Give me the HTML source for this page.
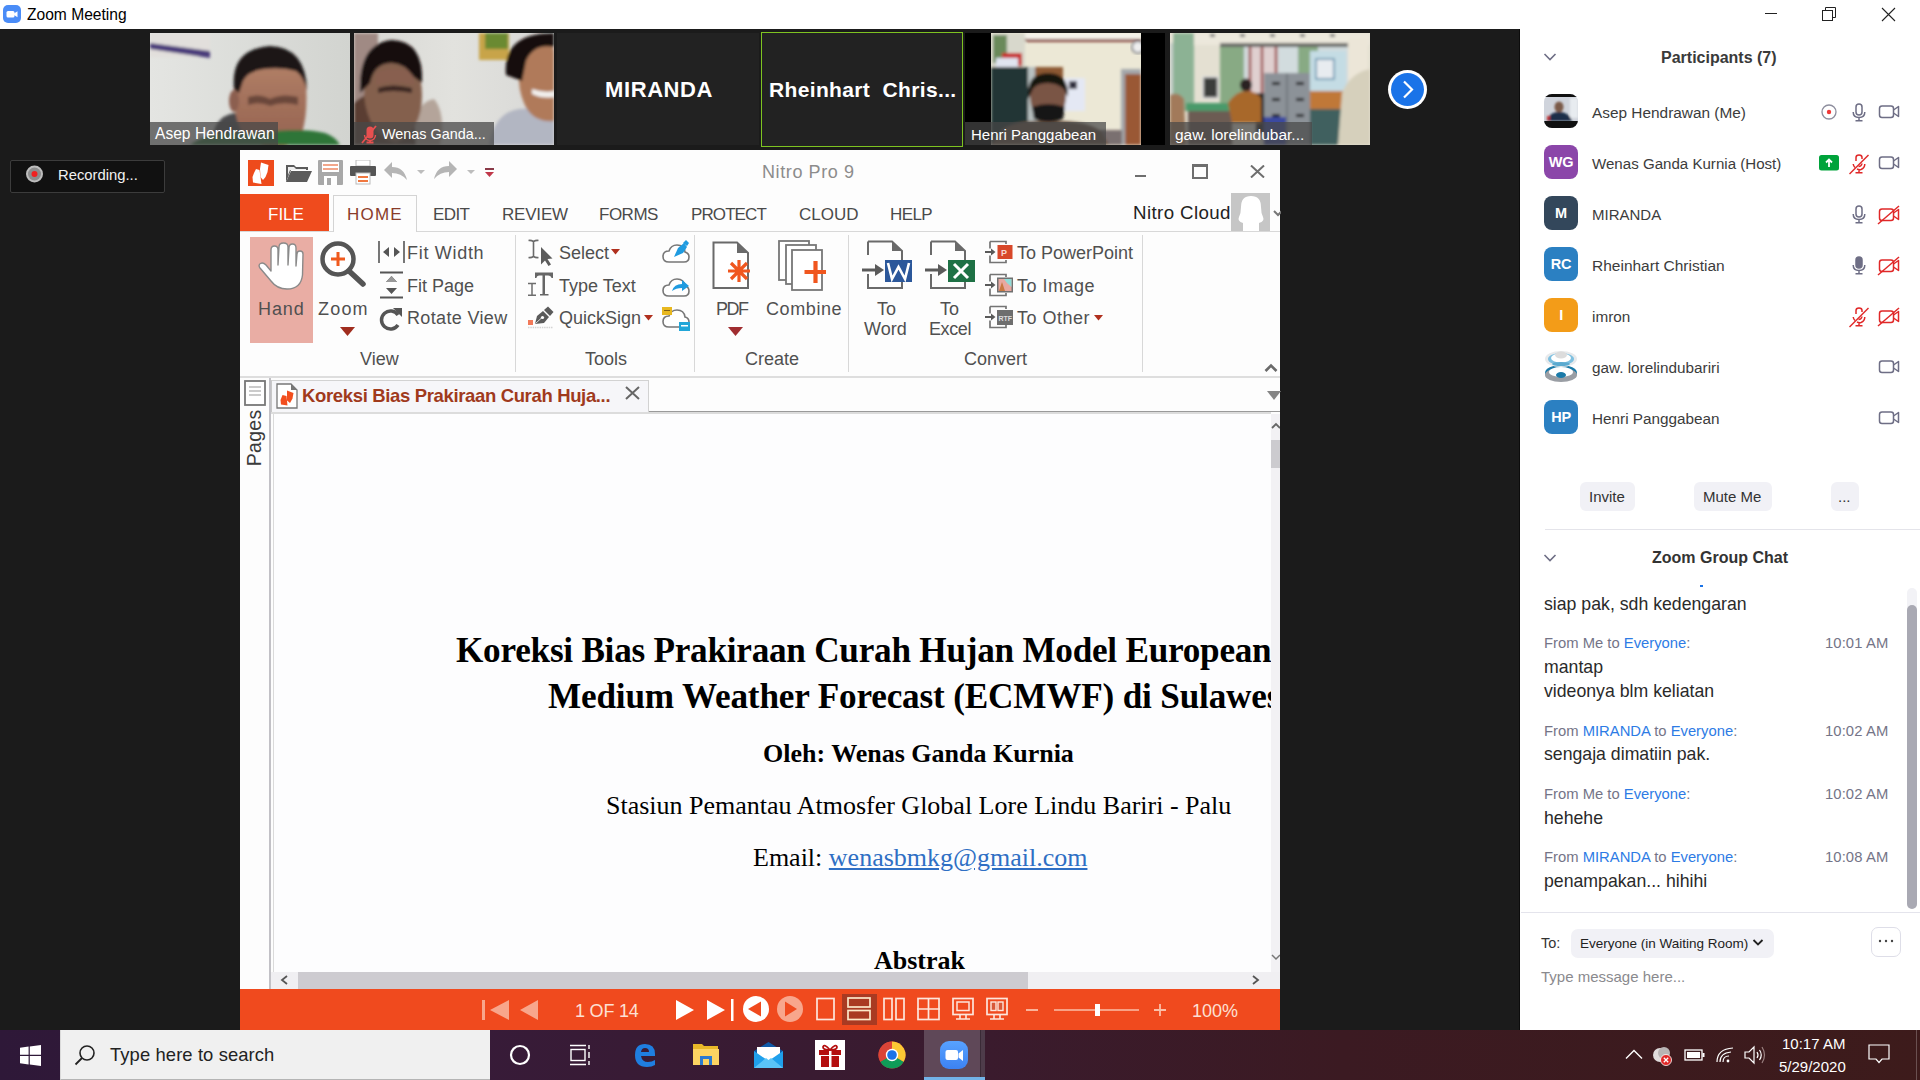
<!DOCTYPE html>
<html><head><meta charset="utf-8">
<style>
*{box-sizing:border-box}
html,body{margin:0;padding:0}
body{width:1920px;height:1080px;position:relative;overflow:hidden;background:#1b1b1b;font-family:"Liberation Sans",sans-serif}
.a{position:absolute}
.t{position:absolute;white-space:nowrap;line-height:1}
</style></head><body>
<!-- TITLE BAR -->
<div class="a" style="left:0;top:0;width:1920px;height:29px;background:#fff"></div>
<div class="a" style="left:3px;top:5px;width:18px;height:18px;background:#4a8cf7;border-radius:5px"></div>
<svg class="a" style="left:3px;top:5px" width="18" height="18"><rect x="3.5" y="6" width="8" height="6.5" rx="1.5" fill="#fff"/><path d="M11 8.5 L14.5 6.3 V12.2 L11 10Z" fill="#fff"/></svg>
<div class="t" style="left:27px;top:7px;font-size:15.6px;color:#000">Zoom Meeting</div>
<div class="a" style="left:1765px;top:13px;width:12px;height:1px;background:#222"></div>
<svg class="a" style="left:1822px;top:7px" width="15" height="15"><rect x="0.5" y="3.5" width="10" height="10" fill="none" stroke="#222"/><path d="M3.5 3.5 V0.5 H13.5 V10.5 H10.5" fill="none" stroke="#222"/></svg>
<svg class="a" style="left:1881px;top:7px" width="15" height="15"><path d="M1 1 L14 14 M14 1 L1 14" stroke="#222" stroke-width="1.1"/></svg>

<!-- VIDEO STRIP -->
<svg class="a" style="left:150px;top:33px" width="200" height="112">
<defs><filter id="b1" x="-10%" y="-10%" width="120%" height="120%"><feGaussianBlur stdDeviation="1.5"/></filter>
<filter id="b2" x="-20%" y="-20%" width="140%" height="140%"><feGaussianBlur stdDeviation="3"/></filter>
<linearGradient id="w1" x1="0" y1="0" x2="1" y2="0"><stop offset="0" stop-color="#e4e5e2"/><stop offset="1" stop-color="#d2d4d0"/></linearGradient>
<linearGradient id="f1" x1="0" y1="0" x2="0" y2="1"><stop offset="0" stop-color="#b8866c"/><stop offset="0.5" stop-color="#a4725c"/><stop offset="1" stop-color="#946250"/></linearGradient></defs>
<rect width="200" height="112" fill="url(#w1)"/>
<g filter="url(#b1)">
<rect x="0" y="0" width="60" height="24" fill="#e2dfdc"/>
<path d="M0 10 L60 18 L60 25 L0 16Z" fill="#4a3a7a"/>
<path d="M62 112 Q62 84 84 80 L98 84 L96 112Z" fill="#4a4a4c"/>
<path d="M84 60 Q82 24 120 14 Q152 16 156 52 Q158 80 152 100 Q140 118 118 114 Q94 110 88 90 Q84 78 84 60Z" fill="url(#f1)"/>
<ellipse cx="84" cy="68" rx="5" ry="11" fill="#8c5e50"/>
<path d="M84 56 Q80 16 120 13 Q156 14 157 58 Q154 44 146 38 Q132 34 114 36 Q98 38 93 48 L89 60Z" fill="#1c1614"/>
<path d="M98 64 Q110 60 120 66 Q132 60 148 64 L148 72 Q132 68 120 73 Q110 68 98 72Z" fill="#6a463a"/>
<path d="M40 112 Q60 96 110 100 Q150 94 175 100 Q186 104 190 112Z" fill="#2f7438"/>
</g>
<rect x="0" y="89" width="128" height="23" fill="rgba(72,72,72,0.75)"/>
</svg>
<div class="t" style="left:155px;top:126px;font-size:15.6px;color:#fff">Asep Hendrawan</div>

<svg class="a" style="left:354px;top:33px" width="200" height="112">
<defs><linearGradient id="w2" x1="0" y1="0" x2="1" y2="0"><stop offset="0" stop-color="#d8d8d4"/><stop offset="0.5" stop-color="#e2e2de"/><stop offset="1" stop-color="#d8d8d6"/></linearGradient></defs>
<rect width="200" height="112" fill="url(#w2)"/>
<g filter="url(#b1)">
<rect x="0" y="0" width="24" height="95" fill="#a08a84"/>
<rect x="125" y="0" width="30" height="27" fill="#c8a448"/>
<rect x="131" y="0" width="23" height="16" fill="#6a8a30"/>
<path d="M55 112 Q58 70 80 66 Q92 80 86 112Z" fill="#b4a49a"/>
<path d="M0 112 L0 70 Q10 60 20 62 L60 80 L62 112Z" fill="#5a3c32"/>
<path d="M10 62 Q10 28 40 27 Q68 28 68 62 Q68 98 42 110 Q14 102 10 62Z" fill="#84604e"/>
<path d="M22 40 Q40 32 60 40 L60 52 Q40 46 22 52Z" fill="#8a6050" opacity="0.7"/>
<path d="M6 60 Q4 10 38 7 Q70 8 68 50 L60 44 Q50 30 38 30 Q20 30 16 50Z" fill="#161010"/>
<path d="M24 55 Q38 50 58 55 L58 60 Q38 56 24 60Z" fill="#3a2620"/>
<path d="M135 112 Q140 80 165 76 L200 74 L200 112Z" fill="#b2b6c2"/>
<path d="M165 40 Q162 8 185 6 Q200 8 200 20 L200 88 Q178 90 170 70 Q164 56 165 40Z" fill="#b07a5a"/>
<path d="M152 42 Q148 0 200 0 L200 14 Q180 10 172 28 L168 48Z" fill="#15100e"/>
<path d="M178 56 Q190 60 200 58 L200 64 Q188 66 178 61Z" fill="#f2f0ee"/>
</g>
<rect x="0" y="89" width="140" height="23" fill="rgba(72,72,72,0.75)"/>
<path d="M12.5 97 a3.5 3.5 0 0 1 7 0 v5 a3.5 3.5 0 0 1 -7 0Z" fill="#e85050"/><path d="M10.5 102 a5.5 5.5 0 0 0 11 0" stroke="#e85050" stroke-width="1.4" fill="none"/><path d="M16 107 v2.5 M12.5 109.5 h7" stroke="#e85050" stroke-width="1.8"/><path d="M8 110 L22 93" stroke="#e85050" stroke-width="1.8"/>
</svg>
<div class="t" style="left:382px;top:127px;font-size:14.4px;color:#fff">Wenas Ganda...</div>

<div class="a" style="left:557px;top:33px;width:202px;height:112px;background:#222"></div>
<div class="t" style="left:605px;top:79px;font-size:22px;font-weight:700;color:#fff;letter-spacing:0.6px">MIRANDA</div>
<div class="a" style="left:761px;top:32px;width:202px;height:115px;background:#222;border:1.5px solid #7ec321"></div>
<div class="t" style="left:769px;top:79px;font-size:21px;font-weight:700;color:#fff;letter-spacing:0.35px">Rheinhart&nbsp; Chris...</div>

<div class="a" style="left:965px;top:33px;width:200px;height:112px;background:#000"></div>
<svg class="a" style="left:991px;top:33px" width="150" height="112">
<rect width="150" height="112" fill="#ece8d6"/>
<g filter="url(#b1)">
<rect x="30" y="0" width="120" height="7" fill="#f4f2ea"/>
<path d="M30 5 L36 9 H150 V6 H36Z" fill="#8a4a40"/>
<rect x="0" y="0" width="34" height="34" fill="#d8d8cc"/>
<rect x="2" y="2" width="14" height="28" fill="#6a8a5a"/>
<rect x="11" y="20" width="20" height="13" fill="#c82828"/>
<rect x="5" y="25" width="22" height="9" fill="#e0e4f0"/>
<rect x="0" y="34" width="37" height="78" fill="#203636"/>
<rect x="37" y="34" width="9" height="60" fill="#b8c0c0"/>
<rect x="44" y="34" width="28" height="28" fill="#8c5832"/>
<rect x="74" y="45" width="20" height="33" fill="#e4e8f4"/>
<rect x="78" y="48" width="8" height="8" fill="#303040"/>
<rect x="130" y="36" width="20" height="76" fill="#a4a8ac"/>
<rect x="134" y="41" width="16" height="71" fill="#9a5834"/>
<rect x="105" y="97" width="26" height="15" fill="#7a7070"/>
<path d="M0 112 L12 96 Q30 86 57 88 Q92 86 110 98 L118 112Z" fill="#6a5444"/>
<path d="M39 62 Q39 46 57 44 Q75 46 75 62 Q75 84 57 90 Q39 84 39 62Z" fill="#7a5444"/>
<path d="M37 66 Q35 40 57 40 Q78 40 77 64 L73 56 Q66 50 57 50 Q44 50 41 58Z" fill="#171210"/>
<path d="M41 74 Q57 68 74 74 L72 86 Q57 92 43 86Z" fill="#141414"/>
</g>
<circle cx="147" cy="14" r="6" fill="#eeeeee" stroke="#4a5060" stroke-width="1.4" filter="url(#b1)"/>
</svg>
<div class="a" style="left:965px;top:122px;width:141px;height:23px;background:rgba(70,70,70,0.72)"></div>
<div class="t" style="left:971px;top:127px;font-size:15px;color:#fff">Henri Panggabean</div>

<svg class="a" style="left:1170px;top:33px" width="200" height="112">
<rect width="200" height="112" fill="#e4e0d2"/>
<g filter="url(#b1)">
<rect x="0" y="0" width="200" height="12" fill="#ece8dc"/>
<g fill="#7a7a78"><rect x="10" y="1" width="5" height="3"/><rect x="40" y="1" width="5" height="3"/><rect x="70" y="1" width="5" height="3"/><rect x="100" y="1" width="5" height="3"/><rect x="130" y="1" width="5" height="3"/><rect x="160" y="1" width="5" height="3"/></g>
<rect x="0" y="10" width="4" height="60" fill="#c8d0cc"/>
<rect x="3" y="0" width="21" height="78" fill="#8cb294"/>
<rect x="50" y="10" width="130" height="4" fill="#6a6a68"/>
<rect x="50" y="14" width="130" height="70" fill="#d2dcde"/>
<rect x="78" y="14" width="30" height="50" fill="#e0d0d0"/>
<path d="M80 14 V64 M92 14 V64 M106 14 V64" stroke="#9a4a48" stroke-width="2.5"/>
<rect x="50" y="14" width="24" height="68" fill="#88aa84"/>
<rect x="128" y="14" width="20" height="60" fill="#88aa84"/>
<rect x="140" y="18" width="36" height="40" fill="#c4dce4"/>
<rect x="146" y="26" width="18" height="20" fill="#e8ecf0" stroke="#5a8aa8" stroke-width="1.5"/>
<rect x="140" y="58" width="36" height="18" fill="#c07838"/>
<rect x="140" y="76" width="36" height="36" fill="#40605e"/>
<rect x="178" y="5" width="20" height="50" fill="#ece6d8"/>
<rect x="33" y="44" width="15" height="21" fill="#3a3e3a" stroke="#e0e0e0" stroke-width="1.5"/>
<rect x="16" y="70" width="48" height="8" fill="#4a9a6a"/>
<rect x="18" y="78" width="44" height="34" fill="#6c5c52"/>
<rect x="86" y="60" width="12" height="40" fill="#2a2622"/>
<path d="M58 70 Q66 58 76 58 Q88 58 91 66 L91 90 L62 90Z" fill="#a8682a"/>
<ellipse cx="76" cy="52" rx="6" ry="6.5" fill="#2a2020"/>
<rect x="94" y="40" width="46" height="72" fill="#8c9298"/>
<path d="M117 40 V112" stroke="#6a7076" stroke-width="1.5"/>
<g fill="#1a1a1a"><rect x="102" y="49" width="8" height="3"/><rect x="126" y="49" width="8" height="3"/><rect x="102" y="65" width="8" height="3"/><rect x="126" y="65" width="8" height="3"/><rect x="102" y="81" width="8" height="3"/><rect x="126" y="81" width="8" height="3"/></g>
<rect x="94" y="84" width="22" height="28" fill="#3a4aa0"/>
<path d="M168 112 L172 60 Q180 40 200 36 L200 112Z" fill="#d6d0bc"/>
<path d="M0 112 V62 Q8 58 14 66 L16 112Z" fill="#a27a5a"/>
</g>
<rect x="0" y="89" width="142" height="23" fill="rgba(72,72,72,0.72)"/>
</svg>
<div class="t" style="left:1175px;top:127px;font-size:15.5px;color:#fff">gaw. lorelindubar...</div>

<svg class="a" style="left:1387px;top:69px" width="41" height="41"><circle cx="20.5" cy="20.5" r="19.5" fill="#fff"/><circle cx="20.5" cy="20.5" r="16.5" fill="#1a73e8"/><path d="M17 12.5 L25 20.5 L17 28.5" stroke="#fff" stroke-width="2.2" fill="none"/></svg>

<!-- RECORDING -->
<div class="a" style="left:10px;top:160px;width:155px;height:33px;background:#111;border:1px solid #3c3c3c;border-radius:2px"></div>
<svg class="a" style="left:25px;top:165px" width="19" height="19"><circle cx="9.5" cy="9" r="8.5" fill="#bdbdbd"/><circle cx="9.5" cy="9" r="6.5" fill="#8c8c8c"/><circle cx="9.5" cy="9" r="3" fill="#f02020"/></svg>
<div class="t" style="left:58px;top:168px;font-size:14.8px;color:#f2f2f2">Recording...</div>

<!-- NITRO WINDOW -->
<div class="a" style="left:240px;top:150px;width:1040px;height:880px;background:#fdfdfd"></div>
<!-- QAT -->
<svg class="a" style="left:248px;top:160px" width="26" height="26"><rect width="26" height="26" fill="#ee4b1c"/><path d="M13 2.5 L20.5 5 L19.5 12 L17.5 17 L15 20 L12.5 17 L12 9Z" fill="#fff"/><path d="M8 9 L11.5 10 L13.5 24 L5 22.5 L4.5 17 L6 13Z" fill="#fff"/></svg>
<svg class="a" style="left:285px;top:162px" width="28" height="22"><path d="M1 3 H9 L11 5 H23 V8 H6 L1 20Z" fill="#5b5b5b"/><path d="M6 9 H27 L22 20 H1Z" fill="#5b5b5b"/><path d="M3 5 H9 L11 7 H21 V8 H5 L3 13Z" fill="#fff" opacity="0.9"/></svg>
<svg class="a" style="left:318px;top:160px" width="25" height="25"><rect x="0" y="0" width="25" height="25" rx="1" fill="#a8a8a8"/><rect x="4" y="2" width="17" height="10" fill="#fff"/><rect x="5" y="4" width="15" height="2" fill="#f2a68a"/><rect x="5" y="8" width="15" height="2" fill="#f2a68a"/><rect x="6" y="16" width="13" height="9" fill="#fff"/><rect x="9" y="18" width="4" height="7" fill="#a8a8a8"/></svg>
<svg class="a" style="left:350px;top:160px" width="26" height="25"><rect x="6" y="0" width="14" height="6" fill="#fff" stroke="#bbb"/><rect x="0" y="6" width="26" height="10" rx="1" fill="#555"/><rect x="6" y="13" width="14" height="11" fill="#fff" stroke="#bbb"/><rect x="8" y="16" width="10" height="2" fill="#f07840"/><rect x="8" y="20" width="10" height="2" fill="#f07840"/></svg>
<svg class="a" style="left:382px;top:160px" width="115" height="24"><path d="M2 10 L10 2 V7 Q22 7 25 20 Q19 13 10 13 V18Z" fill="#b5b5b5"/><path d="M35 10 L43 10 L39 14Z" fill="#bdbdbd"/><path d="M75 9 L67 1 V6 Q55 6 52 19 Q58 12 67 12 V17Z" fill="#b5b5b5"/><path d="M85 10 L93 10 L89 14Z" fill="#bdbdbd"/><rect x="103" y="8" width="9" height="2" fill="#8a3a48"/><path d="M103 12 H112 L107.5 17Z" fill="#c0384a"/></svg>
<div class="t" style="left:762px;top:163px;font-size:18px;color:#8c8c8c;letter-spacing:0.6px">Nitro Pro 9</div>
<div class="a" style="left:1135px;top:175px;width:11px;height:2px;background:#6e6e6e"></div>
<div class="a" style="left:1192px;top:164px;width:16px;height:15px;border:2px solid #6e6e6e;border-top-width:3px"></div>
<svg class="a" style="left:1250px;top:165px" width="15" height="13"><path d="M1 0.5 L14 12.5 M14 0.5 L1 12.5" stroke="#6e6e6e" stroke-width="2"/></svg>

<!-- TABS -->
<div class="a" style="left:240px;top:231px;width:1040px;height:1px;background:#d8d8d8"></div>
<div class="a" style="left:240px;top:194px;width:89px;height:37px;background:#ef4b1d"></div>
<div class="t" style="left:268px;top:206px;font-size:17px;color:#fff">FILE</div>
<div class="a" style="left:333px;top:195px;width:84px;height:37px;background:#fdfdfd;border:1px solid #d4d4d4;border-bottom:none"></div>
<div class="t" style="left:347px;top:206px;font-size:17px;color:#8a3c2a;letter-spacing:1.2px">HOME</div>
<div class="t" style="left:433px;top:206px;font-size:17px;color:#4a4a4a;letter-spacing:-0.6px">EDIT</div>
<div class="t" style="left:502px;top:206px;font-size:17px;color:#4a4a4a;letter-spacing:-0.2px">REVIEW</div>
<div class="t" style="left:599px;top:206px;font-size:17px;color:#4a4a4a;letter-spacing:-0.5px">FORMS</div>
<div class="t" style="left:691px;top:206px;font-size:17px;color:#4a4a4a;letter-spacing:-0.9px">PROTECT</div>
<div class="t" style="left:799px;top:206px;font-size:17px;color:#4a4a4a">CLOUD</div>
<div class="t" style="left:890px;top:206px;font-size:17px;color:#4a4a4a;letter-spacing:-0.6px">HELP</div>
<div class="t" style="left:1133px;top:204px;font-size:18.7px;color:#222;letter-spacing:0.4px">Nitro Cloud</div>
<svg class="a" style="left:1231px;top:193px" width="50" height="38"><rect width="39" height="38" fill="#c6c6c6"/><path d="M12 38 L12 30 Q6 28 8 24 Q10 20 10 14 Q10 3 20 3 Q30 3 30 14 Q30 20 32 24 Q34 28 28 30 L28 38Z" fill="#fff"/><path d="M43 18 L47 22 L51 18" stroke="#777" stroke-width="2" fill="none"/></svg>

<!-- RIBBON -->
<div class="a" style="left:240px;top:376px;width:1040px;height:2px;background:#dedede"></div>
<div class="a" style="left:515px;top:235px;width:1px;height:137px;background:#d8d8d8"></div>
<div class="a" style="left:694px;top:235px;width:1px;height:137px;background:#d8d8d8"></div>
<div class="a" style="left:848px;top:235px;width:1px;height:137px;background:#d8d8d8"></div>
<div class="a" style="left:1142px;top:235px;width:1px;height:137px;background:#d8d8d8"></div>
<!-- View group -->
<div class="a" style="left:250px;top:237px;width:63px;height:106px;background:#e9ada4"></div>
<svg class="a" style="left:257px;top:241px" width="48" height="50"><path d="M14 30 L14 9 Q14 5 17.5 5 Q21 5 21 9 L21 24 L22 6 Q22 2 26.5 2 Q31 2 31 6 L31 24 L32 7 Q32 3 35.5 3 Q39 3 39 7 L39 25 L40 13 Q40 10 43 10 Q46 10 46 13 L45.5 34 Q44 48 30 48 Q20 48 14 40 L3 27 Q1 24 3.5 22.5 Q6 21 9 24 Z" fill="#fff" stroke="#8a8a8a" stroke-width="1.4" stroke-linejoin="round"/></svg>
<div class="t" style="left:258px;top:300px;font-size:18px;color:#505050;letter-spacing:0.9px">Hand</div>
<svg class="a" style="left:318px;top:240px" width="52" height="50"><circle cx="20" cy="19" r="15.5" fill="#fff" stroke="#555" stroke-width="4.5"/><path d="M31 31 L45 44" stroke="#555" stroke-width="5.5" stroke-linecap="round"/><path d="M20 12 V26 M13 19 H27" stroke="#f05a1e" stroke-width="3"/></svg>
<div class="t" style="left:318px;top:300px;font-size:18px;color:#505050;letter-spacing:1.2px">Zoom</div>
<svg class="a" style="left:340px;top:327px" width="16" height="10"><path d="M0 0 H15 L7.5 9Z" fill="#a02d1e"/></svg>
<svg class="a" style="left:378px;top:241px" width="28" height="23"><path d="M1 0 V22 M26 0 V22" stroke="#555" stroke-width="1.6"/><path d="M5 11 L11 6 V16Z M22 11 L16 6 V16Z" fill="#555"/></svg>
<div class="t" style="left:407px;top:244px;font-size:18px;color:#505050;letter-spacing:0.7px">Fit Width</div>
<svg class="a" style="left:379px;top:271px" width="25" height="28"><path d="M1 1.5 H24 M1 26.5 H24" stroke="#555" stroke-width="1.8"/><path d="M12.5 5 L18 11 H7Z M12.5 23 L18 17 H7Z" fill="#555"/><path d="M12.5 5 L18 11 H7Z" fill="#999"/></svg>
<div class="t" style="left:407px;top:277px;font-size:18px;color:#505050">Fit Page</div>
<svg class="a" style="left:379px;top:304px" width="25" height="28"><path d="M19 11 A9 9 0 1 0 19 21" stroke="#555" stroke-width="3.5" fill="none"/><path d="M14 4 L23 4 L23 13Z" fill="#555"/></svg>
<div class="t" style="left:407px;top:309px;font-size:18px;color:#505050;letter-spacing:0.35px">Rotate View</div>
<div class="t" style="left:360px;top:350px;font-size:18px;color:#505050">View</div>
<!-- Tools group -->
<svg class="a" style="left:527px;top:239px" width="27" height="28"><path d="M1.5 1.5 Q4 1 6.5 2.5 Q9 1 11.5 1.5 M6.5 2.5 V17.5 M1.5 18.5 Q4 19 6.5 17.5 Q9 19 11.5 18.5" stroke="#6a6a6a" stroke-width="1.6" fill="none"/><path d="M14 8 L14 25.5 L18 21.5 L21.5 27 L24 25.5 L20.5 20 L25.5 19.5Z" fill="#5c5c5c"/></svg>
<div class="t" style="left:559px;top:244px;font-size:18px;color:#505050">Select</div>
<svg class="a" style="left:611px;top:249px" width="9" height="6"><path d="M0 0 H9 L4.5 5.5Z" fill="#b0301e"/></svg>
<svg class="a" style="left:527px;top:272px" width="27" height="26"><path d="M8 0.5 H26 V6 H24.5 Q24 3.5 21 3.5 H18 V22 H21.5 V23.5 H13 V22 H15.5 V3.5 H12.5 Q9.5 3.5 9.5 6 H8Z" fill="#666"/><path d="M1 11.5 H9 M5 11.5 V23 M1 23.2 H9" stroke="#6e6e6e" stroke-width="1.5" fill="none"/></svg>
<div class="t" style="left:559px;top:277px;font-size:18px;color:#505050">Type Text</div>
<svg class="a" style="left:527px;top:305px" width="27" height="25"><path d="M8 19 L10 11 L16 6 L22 12 L17 18Z" fill="#5a5a5a"/><path d="M17 5 L21 1.5 L26.5 7 L23 11Z" fill="#5a5a5a"/><circle cx="15.5" cy="12.5" r="1.6" fill="#fff"/><path d="M8.5 18.5 L15 12.5" stroke="#fff" stroke-width="0.8"/><rect x="1" y="15" width="5" height="5" fill="#f27a5a"/><path d="M1 22.5 H26" stroke="#d4d4d4" stroke-width="1.4" stroke-dasharray="1.5 0.8"/></svg>
<div class="t" style="left:559px;top:309px;font-size:18px;color:#505050">QuickSign</div>
<svg class="a" style="left:644px;top:315px" width="10" height="6"><path d="M0 0 H9 L4.5 5.5Z" fill="#b0301e"/></svg>
<svg class="a" style="left:662px;top:240px" width="28" height="24"><path d="M7 22 Q1 22 1 16.5 Q1 11 7 11 Q9 5 15 5 Q22 5 23 12 Q27 13 27 17 Q27 22 22 22Z" fill="#fff" stroke="#777" stroke-width="1.6"/><path d="M12 17 L16 8 L22 3 L25 7 L21 13Z" fill="#1f9be0"/><path d="M21 3 L24 0 L27 3 L25 6Z" fill="#1f9be0"/></svg>
<svg class="a" style="left:662px;top:276px" width="28" height="22"><path d="M7 20 Q1 20 1 14.5 Q1 9 7 9 Q9 3 15 3 Q22 3 23 10 Q27 11 27 15 Q27 20 22 20Z" fill="#fff" stroke="#777" stroke-width="1.6"/><path d="M10 15 Q12 8 20 8 V4 L27 10 L20 15 V12 Q14 12 10 15Z" fill="#1f9be0"/></svg>
<svg class="a" style="left:662px;top:307px" width="28" height="25"><path d="M7 20 Q1 20 1 14.5 Q1 9 7 9 Q9 3 15 3 Q22 3 23 10 Q27 11 27 15 Q27 20 22 20Z" fill="#fff" stroke="#777" stroke-width="1.6"/><rect x="0" y="0" width="10" height="8" fill="#e8b820"/><rect x="2" y="3" width="6" height="1" fill="#806010"/><rect x="17" y="15" width="11" height="9" fill="#22a6d8"/><rect x="19" y="18" width="7" height="1.5" fill="#fff"/></svg>
<div class="t" style="left:585px;top:350px;font-size:18px;color:#505050">Tools</div>
<!-- Create group -->
<svg class="a" style="left:712px;top:241px" width="40" height="49"><path d="M1.5 1.5 H25 L36 12 V47 H1.5Z" fill="#fff" stroke="#6a6a6a" stroke-width="2"/><path d="M25 1.5 V12 H36Z" fill="#6a6a6a"/><path d="M27 19 V41 M16 30 H38 M19 22 L35 38 M35 22 L19 38" stroke="#f0561e" stroke-width="3.2"/></svg>
<div class="t" style="left:716px;top:300px;font-size:18px;color:#505050;letter-spacing:-1.5px">PDF</div>
<svg class="a" style="left:728px;top:327px" width="16" height="10"><path d="M0 0 H15 L7.5 9Z" fill="#a02d30"/></svg>
<svg class="a" style="left:778px;top:240px" width="48" height="52"><rect x="1" y="1" width="30" height="39" fill="#fff" stroke="#777" stroke-width="1.8"/><rect x="8" y="5" width="30" height="39" fill="#fff" stroke="#777" stroke-width="1.8"/><rect x="14" y="10" width="30" height="40" fill="#fff" stroke="#777" stroke-width="1.8"/><path d="M37.5 21 V43 M26.5 32 H48" stroke="#f0561e" stroke-width="4.2"/></svg>
<div class="t" style="left:766px;top:300px;font-size:18px;color:#505050;letter-spacing:0.6px">Combine</div>
<div class="t" style="left:745px;top:350px;font-size:18px;color:#505050">Create</div>
<!-- Convert group -->
<svg class="a" style="left:860px;top:240px" width="54" height="50"><path d="M8 1.5 H32 L42 11 V48 H8 V34 M8 15 V1.5" fill="none" stroke="#6a6a6a" stroke-width="2"/><path d="M32 1.5 V11 H42Z" fill="#6a6a6a"/><path d="M2 30 H17" stroke="#5a5a5a" stroke-width="3"/><path d="M15 24 L24 30 L15 36Z" fill="#5a5a5a"/><rect x="25" y="20" width="27" height="22" fill="#2b579a"/><path d="M28 23 L32 39 L38.5 27 L45 39 L49 23" stroke="#fff" stroke-width="2.6" fill="none"/></svg>
<div class="t" style="left:877px;top:300px;font-size:18px;color:#505050">To</div>
<div class="t" style="left:864px;top:320px;font-size:18px;color:#505050">Word</div>
<svg class="a" style="left:923px;top:240px" width="54" height="50"><path d="M8 1.5 H32 L42 11 V48 H8 V34 M8 15 V1.5" fill="none" stroke="#6a6a6a" stroke-width="2"/><path d="M32 1.5 V11 H42Z" fill="#6a6a6a"/><path d="M2 30 H17" stroke="#5a5a5a" stroke-width="3"/><path d="M15 24 L24 30 L15 36Z" fill="#5a5a5a"/><rect x="25" y="20" width="27" height="22" fill="#1e7145"/><path d="M31 24 L45 38 M45 24 L31 38" stroke="#fff" stroke-width="3"/></svg>
<div class="t" style="left:940px;top:300px;font-size:18px;color:#505050">To</div>
<div class="t" style="left:929px;top:320px;font-size:18px;color:#505050;letter-spacing:-0.4px">Excel</div>
<svg class="a" style="left:985px;top:240px" width="28" height="24"><path d="M5 1.5 H21 V4 M5 1.5 V8.5 M5 15.5 V22.5 H21 V20" stroke="#747474" stroke-width="1.7" fill="none"/><path d="M0 12 H7" stroke="#5a5a5a" stroke-width="2"/><path d="M6 8.5 L10.5 12 L6 15.5Z" fill="#5a5a5a"/><rect x="12.5" y="5" width="15" height="14" fill="#d8482a"/><text x="16" y="16" font-size="9" font-weight="bold" fill="#f8d8d0" font-family="Liberation Sans">P</text></svg>
<div class="t" style="left:1017px;top:244px;font-size:18px;color:#505050">To PowerPoint</div>
<svg class="a" style="left:985px;top:273px" width="28" height="24"><path d="M5 1.5 H21 V4 M5 1.5 V8.5 M5 15.5 V22.5 H21 V20" stroke="#747474" stroke-width="1.7" fill="none"/><path d="M0 12 H7" stroke="#5a5a5a" stroke-width="2"/><path d="M6 8.5 L10.5 12 L6 15.5Z" fill="#5a5a5a"/><rect x="12" y="4.5" width="16" height="15" fill="#707070"/><rect x="13.5" y="6" width="13" height="12" fill="#e8a8a0"/><path d="M19 6 H26.5 V14 L22 10Z" fill="#90dcd8"/><path d="M14 18 L17 9 L20 18Z" fill="#c87840"/></svg>
<div class="t" style="left:1017px;top:277px;font-size:18px;color:#505050;letter-spacing:0.5px">To Image</div>
<svg class="a" style="left:985px;top:305px" width="28" height="24"><path d="M5 1.5 H21 V4 M5 1.5 V8.5 M5 15.5 V22.5 H21 V20" stroke="#747474" stroke-width="1.7" fill="none"/><path d="M0 12 H7" stroke="#5a5a5a" stroke-width="2"/><path d="M6 8.5 L10.5 12 L6 15.5Z" fill="#5a5a5a"/><rect x="12" y="5" width="16" height="15" fill="#6e6e6e"/><text x="13.5" y="15.5" font-size="7" font-weight="bold" fill="#ddd" font-family="Liberation Sans">RTF</text></svg>
<div class="t" style="left:1017px;top:309px;font-size:18px;color:#505050;letter-spacing:0.5px">To Other</div>
<svg class="a" style="left:1094px;top:315px" width="9" height="6"><path d="M0 0 H9 L4.5 5.5Z" fill="#b0301e"/></svg>
<div class="t" style="left:964px;top:350px;font-size:18px;color:#505050">Convert</div>
<svg class="a" style="left:1264px;top:363px" width="14" height="10"><path d="M1.5 8 L7 2.5 L12.5 8" stroke="#6a6a6a" stroke-width="2.6" fill="none"/></svg>

<!-- DOC TAB STRIP & PAGES PANEL -->

<svg class="a" style="left:244px;top:380px" width="22" height="26"><rect x="1" y="1" width="20" height="24" fill="#fff" stroke="#777" stroke-width="1.8"/><path d="M5 7 H17 M5 11 H17 M5 15 H17" stroke="#bbb" stroke-width="1.3"/></svg>
<div class="t" style="left:228px;top:430px;font-size:19.5px;color:#3a3a3a;transform:rotate(-90deg);transform-origin:center;width:53px;text-align:center;letter-spacing:0.3px">Pages</div>
<div class="a" style="left:271px;top:380px;width:378px;height:33px;background:#f6f6f9;border:1px solid #d2d2d2;border-bottom:none;border-left-color:#c8c8c8"></div>
<div class="a" style="left:649px;top:411px;width:631px;height:1px;background:#9a9a9a"></div>
<div class="a" style="left:271px;top:412px;width:1000px;height:2px;background:#dcdcdc"></div>
<svg class="a" style="left:276px;top:383px" width="22" height="26"><path d="M1 1 H15 L21 7 V25 H1Z" fill="#fff" stroke="#777" stroke-width="1.3"/><path d="M15 1 V7 H21Z" fill="#777"/><path d="M11 7.5 L17.5 10 L16.5 15.5 L14 20 L11 17.5Z" fill="#f24e1e"/><path d="M6.5 12 L10.5 13 L11.5 22.5 L5 21.5 L4.5 17Z" fill="#f24e1e"/></svg>
<div class="t" style="left:302px;top:387px;font-size:18.5px;font-weight:700;color:#a03a1c;letter-spacing:-0.35px">Koreksi Bias Prakiraan Curah Huja...</div>
<svg class="a" style="left:625px;top:386px" width="15" height="14"><path d="M1 1 L14 13 M14 1 L1 13" stroke="#666" stroke-width="2"/></svg>
<svg class="a" style="left:1267px;top:391px" width="14" height="10"><path d="M0 0 H14 L7 9Z" fill="#858585"/></svg>

<!-- PAGE VIEW -->
<div class="a" style="left:273px;top:414px;width:2px;height:558px;background:#dadada"></div>
<div class="a" style="left:274px;top:414px;width:997px;height:558px;background:#fdfdfe"></div>
<div class="a" style="left:1271px;top:414px;width:9px;height:558px;background:#f2f1f4"></div>
<svg class="a" style="left:1271px;top:421px" width="9" height="9"><path d="M1 7 L5 3 L9 7" stroke="#666" stroke-width="1.8" fill="none"/></svg>
<div class="a" style="left:1271px;top:440px;width:9px;height:28px;background:#cccbcf"></div>
<svg class="a" style="left:1271px;top:953px" width="9" height="8"><path d="M1 2 L5 6 L9 2" stroke="#777" stroke-width="1.5" fill="none"/></svg>
<div class="a" style="left:271px;top:972px;width:1009px;height:17px;background:#f0eff2"></div>
<div class="a" style="left:298px;top:972px;width:730px;height:17px;background:#cdcbd0"></div>
<svg class="a" style="left:279px;top:974px" width="10" height="12"><path d="M8 2 L3 6 L8 10" stroke="#555" stroke-width="1.8" fill="none"/></svg>
<svg class="a" style="left:1251px;top:974px" width="10" height="12"><path d="M2 2 L7 6 L2 10" stroke="#555" stroke-width="1.8" fill="none"/></svg>

<div class="a" style="left:274px;top:414px;width:997px;height:558px;overflow:hidden">
<div class="t" style="left:182px;top:219px;font-family:'Liberation Serif',serif;font-size:35.2px;letter-spacing:-0.25px;font-weight:700;color:#000">Koreksi Bias Prakiraan Curah Hujan Model European</div>
<div class="t" style="left:274px;top:265px;font-family:'Liberation Serif',serif;font-size:35.2px;letter-spacing:-0.18px;font-weight:700;color:#000">Medium Weather Forecast (ECMWF) di Sulawesi</div>
<div class="t" style="left:489px;top:327px;font-family:'Liberation Serif',serif;font-size:26px;font-weight:700;color:#000">Oleh: Wenas Ganda Kurnia</div>
<div class="t" style="left:332px;top:379px;font-family:'Liberation Serif',serif;font-size:26px;color:#000">Stasiun Pemantau Atmosfer Global Lore Lindu Bariri - Palu</div>
<div class="t" style="left:479px;top:431px;font-family:'Liberation Serif',serif;font-size:26px;color:#000">Email: <span style="color:#2f6fc4;text-decoration:underline">wenasbmkg@gmail.com</span></div>
<div class="t" style="left:600px;top:534px;font-family:'Liberation Serif',serif;font-size:26px;font-weight:700;color:#000">Abstrak</div>
</div>
<div class="a" style="left:269px;top:378px;width:1.5px;height:611px;background:#c2c1c6"></div>
<!-- BOTTOM ORANGE BAR -->
<div class="a" style="left:240px;top:989px;width:1040px;height:41px;background:#f04a1e"></div>
<svg class="a" style="left:480px;top:994px" width="780" height="32">
<g fill="#f8a68c"><rect x="2" y="6" width="3" height="20"/><path d="M10 16 L29 6 V26Z"/><path d="M40 16 L58 6 V26Z"/></g>
<g fill="#fff"><path d="M196 6 L214 16 L196 26Z"/><path d="M227 6 L245 16 L227 26Z"/><rect x="251" y="5" width="2.5" height="22"/></g>
<circle cx="276" cy="15" r="13" fill="#fff"/><path d="M268 15 L281 7.5 V22.5Z" fill="#f04a1e"/>
<circle cx="310" cy="15" r="13" fill="#f8a68c"/><path d="M317 15 L305 7.5 V22.5Z" fill="#f04a1e"/>
<rect x="337" y="4.5" width="17" height="21" fill="none" stroke="#fde6dc" stroke-width="1.7"/>
<rect x="362" y="0" width="35" height="31" fill="#a93a22"/>
<rect x="368" y="4" width="22" height="9" fill="none" stroke="#fce8c8" stroke-width="1.7"/><rect x="368" y="16.5" width="22" height="9" fill="none" stroke="#fce8c8" stroke-width="1.7"/>
<rect x="404" y="4.5" width="8" height="21" fill="none" stroke="#fde6dc" stroke-width="1.7"/><rect x="416" y="4.5" width="8" height="21" fill="none" stroke="#fde6dc" stroke-width="1.7"/>
<rect x="438" y="4.5" width="21" height="21" fill="none" stroke="#fde6dc" stroke-width="1.7"/><path d="M448.5 4 V26 M437 15 H460" stroke="#fde6dc" stroke-width="1.7"/>
<rect x="473" y="4.5" width="20" height="16" fill="none" stroke="#fde6dc" stroke-width="1.7"/><rect x="477" y="8" width="12" height="8.5" fill="none" stroke="#fde6dc" stroke-width="1.5"/><path d="M476 25 H490 M480 21 V24.5 M486 21 V24.5" stroke="#fde6dc" stroke-width="1.6"/>
<rect x="507" y="4.5" width="20" height="16" fill="none" stroke="#fde6dc" stroke-width="1.7"/><rect x="511" y="8" width="5" height="8.5" fill="#d85838" stroke="#fde6dc" stroke-width="1.4"/><rect x="518" y="8" width="5" height="8.5" fill="#d85838" stroke="#fde6dc" stroke-width="1.4"/><path d="M510 25 H524 M514 21 V24.5 M520 21 V24.5" stroke="#fde6dc" stroke-width="1.6"/>
<path d="M546 16 H558" stroke="#fbbfa8" stroke-width="1.8"/>
<path d="M574 16 H659" stroke="#fbbfa8" stroke-width="1.5"/><rect x="615" y="10" width="5" height="12" fill="#fff"/>
<path d="M674 16 H686 M680 10 V22" stroke="#fbbfa8" stroke-width="1.8"/>
</svg>
<div class="t" style="left:575px;top:1002px;font-size:18px;color:#fde0d4;letter-spacing:-0.2px">1 OF 14</div>
<div class="t" style="left:1192px;top:1002px;font-size:18px;color:#fde0d4">100%</div>

<!-- RIGHT PANEL -->
<div class="a" style="left:1519px;top:29px;width:1px;height:1001px;background:#0c0c0c"></div>
<div class="a" style="left:1520px;top:29px;width:400px;height:1001px;background:#fff"></div>
<svg class="a" style="left:1543px;top:52px" width="14" height="10"><path d="M1.5 2 L7 7.5 L12.5 2" stroke="#6e6e85" stroke-width="1.6" fill="none"/></svg>
<div class="t" style="left:1661px;top:50px;font-size:16px;font-weight:700;color:#3a3a3a">Participants (7)</div>
<svg class="a" style="left:1544px;top:94px" width="34" height="34"><defs><clipPath id="ca"><rect width="34" height="34" rx="8"/></clipPath><filter id="bb"><feGaussianBlur stdDeviation="0.8"/></filter></defs><g clip-path="url(#ca)"><rect width="34" height="34" fill="#d0d4dc"/><g filter="url(#bb)"><rect x="26" y="4" width="8" height="20" fill="#e8ecf0"/><ellipse cx="15" cy="13" rx="4.5" ry="5.5" fill="#7a5a48"/><path d="M3 27 Q5 18 15 18 Q25 18 28 27Z" fill="#1c2e48"/><rect x="3" y="22" width="3" height="4" fill="#c03030"/></g><rect x="0" y="27" width="34" height="7" fill="#101010"/><rect x="0" y="0" width="34" height="3" fill="#101010"/></g></svg>
<div class="t" style="left:1592px;top:105px;font-size:15.4px;color:#3c3c3c">Asep Hendrawan (Me)</div>
<div class="a" style="left:1544px;top:145px;width:34px;height:34px;border-radius:8px;background:#8b46a9"></div>
<div class="t" style="left:1544px;top:155px;width:34px;text-align:center;font-size:14.5px;font-weight:700;color:#fff;letter-spacing:-0.3px">WG</div>
<div class="t" style="left:1592px;top:156px;font-size:15.1px;color:#3c3c3c">Wenas Ganda Kurnia (Host)</div>
<div class="a" style="left:1544px;top:196px;width:34px;height:34px;border-radius:8px;background:#33475b"></div>
<div class="t" style="left:1544px;top:206px;width:34px;text-align:center;font-size:14.5px;font-weight:700;color:#fff;letter-spacing:-0.3px">M</div>
<div class="t" style="left:1592px;top:207px;font-size:15px;color:#3c3c3c">MIRANDA</div>
<div class="a" style="left:1544px;top:247px;width:34px;height:34px;border-radius:8px;background:#2b80c2"></div>
<div class="t" style="left:1544px;top:257px;width:34px;text-align:center;font-size:14.5px;font-weight:700;color:#fff;letter-spacing:-0.3px">RC</div>
<div class="t" style="left:1592px;top:258px;font-size:15.5px;color:#3c3c3c">Rheinhart Christian</div>
<div class="a" style="left:1544px;top:298px;width:34px;height:34px;border-radius:8px;background:#f39c18"></div>
<div class="t" style="left:1544px;top:308px;width:34px;text-align:center;font-size:14.5px;font-weight:700;color:#fff;letter-spacing:-0.3px">I</div>
<div class="t" style="left:1592px;top:309px;font-size:15.3px;color:#3c3c3c">imron</div>
<svg class="a" style="left:1544px;top:349px" width="34" height="34"><ellipse cx="17" cy="24" rx="16" ry="8" fill="#1a7aa8"/><ellipse cx="17" cy="26" rx="16" ry="7" fill="#9a9ea4"/><ellipse cx="17" cy="23" rx="12" ry="5" fill="#fff"/><ellipse cx="17" cy="26" rx="5" ry="3" fill="#1a7aa8"/><ellipse cx="17" cy="10" rx="16" ry="8" fill="#e8eaec"/><ellipse cx="17" cy="10" rx="13" ry="6" fill="#7ec0e0"/><ellipse cx="17" cy="9" rx="10" ry="4.5" fill="#fff"/><ellipse cx="17" cy="6" rx="6" ry="3.5" fill="#dcdcdc"/><ellipse cx="17" cy="15" rx="9" ry="2" fill="#5aaad0"/></svg>
<div class="t" style="left:1592px;top:360px;font-size:15.3px;color:#3c3c3c">gaw. lorelindubariri</div>
<div class="a" style="left:1544px;top:400px;width:34px;height:34px;border-radius:8px;background:#2b80c2"></div>
<div class="t" style="left:1544px;top:410px;width:34px;text-align:center;font-size:14.5px;font-weight:700;color:#fff;letter-spacing:-0.3px">HP</div>
<div class="t" style="left:1592px;top:411px;font-size:15.3px;color:#3c3c3c">Henri Panggabean</div>
<svg class="a" style="left:1821px;top:104px" width="16" height="16"><circle cx="8" cy="8" r="7" fill="none" stroke="#8e8e9e" stroke-width="1.3"/><circle cx="8" cy="8" r="2.2" fill="#f03838"/></svg>
<svg class="a" style="left:1852px;top:103px" width="14" height="19"><rect x="4" y="1" width="6" height="11" rx="3" fill="none" stroke="#6e6e85" stroke-width="1.5"/><path d="M1.2 9 Q1.2 14.5 7 14.5 Q12.8 14.5 12.8 9 M7 14.5 V17.5 M3.5 17.7 H10.5" fill="none" stroke="#6e6e85" stroke-width="1.5"/></svg>
<svg class="a" style="left:1878px;top:105px" width="22" height="14"><rect x="1.5" y="1" width="14" height="11.5" rx="2.5" fill="none" stroke="#6e6e85" stroke-width="1.5"/><path d="M15.5 5 L20.5 1.5 V11.5 L15.5 8" fill="none" stroke="#6e6e85" stroke-width="1.5" stroke-linejoin="round"/></svg>
<svg class="a" style="left:1819px;top:155px" width="21" height="16"><rect width="20" height="15.5" rx="2.5" fill="#00a33b"/><path d="M10 12 V5 M7 7.5 L10 4.5 L13 7.5" stroke="#fff" stroke-width="1.8" fill="none"/></svg>
<svg class="a" style="left:1848px;top:153px" width="22" height="22"><path d="M8 8 V4.5 Q8 2 11 2 Q14 2 14 4.5 V6" fill="none" stroke="#e02828" stroke-width="1.5"/><path d="M5.2 11 Q5.5 13 7 14.5 M9 16 Q11 17 13 16.5 Q16.8 15 16.8 11 M11 16.8 V19.5 M7.5 19.7 H14.5 M10.5 13.5 Q13.5 13.5 14 10.5" fill="none" stroke="#e02828" stroke-width="1.5"/><path d="M1.5 21 L20.5 2" stroke="#e02828" stroke-width="1.5"/></svg>
<svg class="a" style="left:1878px;top:156px" width="22" height="14"><rect x="1.5" y="1" width="14" height="11.5" rx="2.5" fill="none" stroke="#6e6e85" stroke-width="1.5"/><path d="M15.5 5 L20.5 1.5 V11.5 L15.5 8" fill="none" stroke="#6e6e85" stroke-width="1.5" stroke-linejoin="round"/></svg>
<svg class="a" style="left:1852px;top:205px" width="14" height="19"><rect x="4" y="1" width="6" height="11" rx="3" fill="none" stroke="#6e6e85" stroke-width="1.5"/><path d="M1.2 9 Q1.2 14.5 7 14.5 Q12.8 14.5 12.8 9 M7 14.5 V17.5 M3.5 17.7 H10.5" fill="none" stroke="#6e6e85" stroke-width="1.5"/></svg>
<svg class="a" style="left:1877px;top:204px" width="24" height="22"><rect x="2.5" y="5" width="14" height="11.5" rx="2.5" fill="none" stroke="#e02828" stroke-width="1.5"/><path d="M16.5 9 L21.5 5.5 V15.5 L16.5 12" fill="none" stroke="#e02828" stroke-width="1.5" stroke-linejoin="round"/><path d="M1 20 L22 2" stroke="#e02828" stroke-width="1.5"/></svg>
<svg class="a" style="left:1852px;top:256px" width="14" height="19"><rect x="4" y="1" width="6" height="11" rx="3" fill="#6e6e85" stroke="#6e6e85" stroke-width="1.5"/><path d="M1.2 9 Q1.2 14.5 7 14.5 Q12.8 14.5 12.8 9 M7 14.5 V17.5 M3.5 17.7 H10.5" fill="none" stroke="#6e6e85" stroke-width="1.5"/></svg>
<svg class="a" style="left:1877px;top:255px" width="24" height="22"><rect x="2.5" y="5" width="14" height="11.5" rx="2.5" fill="none" stroke="#e02828" stroke-width="1.5"/><path d="M16.5 9 L21.5 5.5 V15.5 L16.5 12" fill="none" stroke="#e02828" stroke-width="1.5" stroke-linejoin="round"/><path d="M1 20 L22 2" stroke="#e02828" stroke-width="1.5"/></svg>
<svg class="a" style="left:1848px;top:306px" width="22" height="22"><path d="M8 8 V4.5 Q8 2 11 2 Q14 2 14 4.5 V6" fill="none" stroke="#e02828" stroke-width="1.5"/><path d="M5.2 11 Q5.5 13 7 14.5 M9 16 Q11 17 13 16.5 Q16.8 15 16.8 11 M11 16.8 V19.5 M7.5 19.7 H14.5 M10.5 13.5 Q13.5 13.5 14 10.5" fill="none" stroke="#e02828" stroke-width="1.5"/><path d="M1.5 21 L20.5 2" stroke="#e02828" stroke-width="1.5"/></svg>
<svg class="a" style="left:1877px;top:306px" width="24" height="22"><rect x="2.5" y="5" width="14" height="11.5" rx="2.5" fill="none" stroke="#e02828" stroke-width="1.5"/><path d="M16.5 9 L21.5 5.5 V15.5 L16.5 12" fill="none" stroke="#e02828" stroke-width="1.5" stroke-linejoin="round"/><path d="M1 20 L22 2" stroke="#e02828" stroke-width="1.5"/></svg>
<svg class="a" style="left:1878px;top:360px" width="22" height="14"><rect x="1.5" y="1" width="14" height="11.5" rx="2.5" fill="none" stroke="#6e6e85" stroke-width="1.5"/><path d="M15.5 5 L20.5 1.5 V11.5 L15.5 8" fill="none" stroke="#6e6e85" stroke-width="1.5" stroke-linejoin="round"/></svg>
<svg class="a" style="left:1878px;top:411px" width="22" height="14"><rect x="1.5" y="1" width="14" height="11.5" rx="2.5" fill="none" stroke="#6e6e85" stroke-width="1.5"/><path d="M15.5 5 L20.5 1.5 V11.5 L15.5 8" fill="none" stroke="#6e6e85" stroke-width="1.5" stroke-linejoin="round"/></svg>
<div class="a" style="left:1580px;top:482px;width:55px;height:29px;border-radius:6px;background:#f1f1f6"></div>
<div class="t" style="left:1589px;top:489px;font-size:15px;color:#333">Invite</div>
<div class="a" style="left:1694px;top:482px;width:78px;height:29px;border-radius:6px;background:#f1f1f6"></div>
<div class="t" style="left:1703px;top:489px;font-size:15px;color:#333">Mute Me</div>
<div class="a" style="left:1831px;top:482px;width:28px;height:29px;border-radius:6px;background:#f1f1f6"></div>
<div class="t" style="left:1838px;top:489px;font-size:15px;color:#333">...</div>
<div class="a" style="left:1545px;top:529px;width:375px;height:1px;background:#e4e4ea"></div>
<svg class="a" style="left:1543px;top:553px" width="14" height="10"><path d="M1.5 2 L7 7.5 L12.5 2" stroke="#6e6e85" stroke-width="1.6" fill="none"/></svg>
<div class="t" style="left:1652px;top:550px;font-size:16px;font-weight:700;color:#333">Zoom Group Chat</div>
<div class="a" style="left:1520px;top:580px;width:390px;height:6px;background:#fff"></div>
<div class="a" style="left:1700px;top:585px;width:3px;height:2px;background:#1a73e8"></div>
<div class="t" style="left:1544px;top:596px;font-size:17.7px;color:#2a2a2a">siap pak, sdh kedengaran</div>
<div class="t" style="left:1544px;top:636px;font-size:14.8px;color:#747487">From Me to <span style="color:#2d7be5">Everyone</span>:</div><div class="t" style="left:1825px;top:636px;font-size:14.8px;color:#747487;letter-spacing:0.1px">10:01 AM</div>
<div class="t" style="left:1544px;top:659px;font-size:17.7px;color:#2a2a2a">mantap</div>
<div class="t" style="left:1544px;top:683px;font-size:17.7px;color:#2a2a2a">videonya blm keliatan</div>
<div class="t" style="left:1544px;top:724px;font-size:14.8px;color:#747487">From <span style="color:#2d7be5">MIRANDA</span> to <span style="color:#2d7be5">Everyone</span>:</div><div class="t" style="left:1825px;top:724px;font-size:14.8px;color:#747487;letter-spacing:0.1px">10:02 AM</div>
<div class="t" style="left:1544px;top:746px;font-size:17.7px;color:#2a2a2a">sengaja dimatiin pak.</div>
<div class="t" style="left:1544px;top:787px;font-size:14.8px;color:#747487">From Me to <span style="color:#2d7be5">Everyone</span>:</div><div class="t" style="left:1825px;top:787px;font-size:14.8px;color:#747487;letter-spacing:0.1px">10:02 AM</div>
<div class="t" style="left:1544px;top:810px;font-size:17.7px;color:#2a2a2a">hehehe</div>
<div class="t" style="left:1544px;top:850px;font-size:14.8px;color:#747487">From <span style="color:#2d7be5">MIRANDA</span> to <span style="color:#2d7be5">Everyone</span>:</div><div class="t" style="left:1825px;top:850px;font-size:14.8px;color:#747487;letter-spacing:0.1px">10:08 AM</div>
<div class="t" style="left:1544px;top:873px;font-size:17.7px;color:#2a2a2a">penampakan... hihihi</div>
<div class="a" style="left:1907px;top:588px;width:10px;height:321px;border-radius:5px;background:#f2f2f6"></div>
<div class="a" style="left:1907px;top:605px;width:10px;height:304px;border-radius:5px;background:#a9a9b3"></div>
<div class="a" style="left:1521px;top:912px;width:399px;height:1px;background:#e4e4ec"></div>
<div class="t" style="left:1541px;top:936px;font-size:14.5px;color:#333">To:</div>
<div class="a" style="left:1571px;top:929px;width:203px;height:29px;border-radius:7px;background:#f1f1f6"></div>
<div class="t" style="left:1580px;top:937px;font-size:13.5px;color:#222">Everyone (in Waiting Room)</div>
<svg class="a" style="left:1752px;top:938px" width="12" height="9"><path d="M1.5 2 L6 6.5 L10.5 2" stroke="#222" stroke-width="1.8" fill="none"/></svg>
<div class="a" style="left:1871px;top:927px;width:30px;height:30px;border-radius:7px;border:1px solid #dedee8;background:#fff"></div>
<svg class="a" style="left:1878px;top:939px" width="16" height="4"><circle cx="2" cy="2" r="1.2" fill="#444"/><circle cx="8" cy="2" r="1.2" fill="#444"/><circle cx="14" cy="2" r="1.2" fill="#444"/></svg>
<div class="t" style="left:1541px;top:969px;font-size:15px;color:#8a8a8e">Type message here...</div>

<!-- TASKBAR -->
<div class="a" style="left:0;top:1030px;width:1920px;height:50px;background:linear-gradient(90deg,#2e1838 0%,#371b38 25%,#3a1b2e 50%,#3b1a22 70%,#3d1b1b 100%)"></div>
<svg class="a" style="left:20px;top:1045px" width="21" height="21"><path d="M0 2.8 L8.6 1.6 V9.8 H0Z M9.8 1.4 L21 0 V9.8 H9.8Z M0 11 H8.6 V19.4 L0 18.2Z M9.8 11 H21 V21 L9.8 19.6Z" fill="#fff"/></svg>
<div class="a" style="left:60px;top:1030px;width:430px;height:50px;background:#f0f0f0;border-left:1px solid #dadada;border-bottom:1px solid #b4b4b4"></div>
<svg class="a" style="left:74px;top:1044px" width="22" height="22"><circle cx="13" cy="9" r="7" fill="none" stroke="#222" stroke-width="1.6"/><path d="M8 14 L1.5 20.5" stroke="#222" stroke-width="1.8"/></svg>
<div class="t" style="left:110px;top:1046px;font-size:18.4px;color:#222;letter-spacing:0.1px">Type here to search</div>
<svg class="a" style="left:509px;top:1044px" width="22" height="22"><circle cx="11" cy="11" r="9" fill="none" stroke="#fff" stroke-width="2.2"/></svg>
<svg class="a" style="left:569px;top:1044px" width="22" height="22"><rect x="2" y="5.5" width="14" height="11" fill="none" stroke="#fff" stroke-width="1.4"/><path d="M1 1.5 H17 M1 20.5 H17 M20 1 V5 M20 8 V14 M20 17 V21" stroke="#fff" stroke-width="1.4"/></svg>
<svg class="a" style="left:632px;top:1041px" width="26" height="27"><path d="M3 14 Q3 3 13 3 Q23 3 23 13 V15 H9 Q10 21 16 21 Q20 21 23 19 V24 Q20 26 15 26 Q3 26 3 14Z M9 11 H17 Q17 7 13 7 Q9.5 7 9 11Z" fill="#1f7ee0"/></svg>
<svg class="a" style="left:692px;top:1042px" width="28" height="25"><path d="M1 2 H10 L12 4 H26 V23 H1Z" fill="#e8b828"/><path d="M1 7 H27 V23 H1Z" fill="#fcd462"/><rect x="8" y="14" width="12" height="9" fill="#2a7ad0"/><rect x="11" y="17" width="6" height="6" fill="#fcd462"/></svg>
<svg class="a" style="left:753px;top:1041px" width="31" height="28"><path d="M1 10 L15.5 1 L30 10 V27 H1Z" fill="#0f5aa8"/><path d="M4 6 H27 V20 H4Z" fill="#fff"/><path d="M1 10 L15.5 20 L30 10 V27 H1Z" fill="#1fa0ec"/><path d="M1 27 L13 17 L15.5 19 L18 17 L30 27Z" fill="#5ac4f8"/></svg>
<svg class="a" style="left:815px;top:1040px" width="30" height="30"><rect width="30" height="30" fill="#fff"/><rect x="4" y="10" width="22" height="5" fill="#b40e0e"/><rect x="6" y="16" width="18" height="11" fill="#b40e0e"/><rect x="14" y="10" width="2.5" height="17" fill="#fff"/><path d="M15 10 Q9 3 8 7 Q8 10 15 10 Q22 10 22 7 Q21 3 15 10" fill="none" stroke="#b40e0e" stroke-width="1.8"/></svg>
<svg class="a" style="left:878px;top:1041px" width="28" height="28"><circle cx="14" cy="14" r="13.5" fill="#db4437"/><path d="M14 14 L25.7 20.75 A13.5 13.5 0 0 1 2.3 20.75Z" fill="#0f9d58"/><path d="M14 14 L2.3 20.75 A13.5 13.5 0 0 1 14 0.5 L14 0.5Z" fill="#db4437"/><path d="M14 14 L14 0.5 A13.5 13.5 0 0 1 25.7 20.75Z" fill="#fcc934"/><path d="M14 7.5 H25.5 L20 17Z" fill="#db4437" opacity="0"/><circle cx="14" cy="14" r="6.2" fill="#fff"/><circle cx="14" cy="14" r="4.8" fill="#1a73e8"/></svg>
<div class="a" style="left:924px;top:1030px;width:56px;height:50px;background:#5f4858"></div>
<div class="a" style="left:980px;top:1030px;width:1px;height:50px;background:#3a2a36"></div>
<div class="a" style="left:981px;top:1030px;width:4px;height:50px;background:#4e3c4a"></div>
<div class="a" style="left:924px;top:1077px;width:61px;height:3px;background:#72b4e8"></div>
<div class="a" style="left:940px;top:1041px;width:28px;height:28px;border-radius:9px;background:linear-gradient(180deg,#58a2ff,#3c82f2)"></div>
<svg class="a" style="left:940px;top:1041px" width="28" height="28"><rect x="5.5" y="9" width="12.5" height="10" rx="2" fill="#fff"/><path d="M18.5 12.5 L23 9 V20 L18.5 16.5Z" fill="#fff"/></svg>
<svg class="a" style="left:1625px;top:1049px" width="18" height="11"><path d="M1 9.5 L9 1.5 L17 9.5" stroke="#fff" stroke-width="1.4" fill="none"/></svg>
<svg class="a" style="left:1651px;top:1046px" width="24" height="20"><circle cx="9" cy="9" r="7" fill="#e0dcdc"/><circle cx="13" cy="7" r="6" fill="#b8b4b4"/><circle cx="15" cy="14" r="5.5" fill="#e02828" stroke="#fff" stroke-width="0.8"/><path d="M12.8 11.8 L17.2 16.2 M17.2 11.8 L12.8 16.2" stroke="#fff" stroke-width="1.3"/></svg>
<svg class="a" style="left:1684px;top:1049px" width="22" height="13"><rect x="1" y="1" width="17" height="10" fill="none" stroke="#fff" stroke-width="1.3"/><rect x="3" y="3" width="13" height="6" fill="#fff"/><rect x="18.5" y="4" width="2" height="4" fill="#fff"/></svg>
<svg class="a" style="left:1716px;top:1046px" width="20" height="18"><path d="M1 16 Q1 3 17 2 M4 16 Q4 7 15 6 M7 16 Q7 10 13 10" stroke="#fff" stroke-width="1.2" fill="none"/><circle cx="12" cy="15" r="1.4" fill="#fff"/></svg>
<svg class="a" style="left:1744px;top:1045px" width="22" height="20"><path d="M1 7 H5 L10 2 V18 L5 13 H1Z" fill="none" stroke="#fff" stroke-width="1.2"/><path d="M13 7 Q15 10 13 13 M15.5 5 Q19 10 15.5 15" stroke="#fff" stroke-width="1.2" fill="none"/><path d="M18 2 Q23 10 18 18" stroke="#9a8080" stroke-width="1.2" fill="none"/></svg>
<div class="t" style="left:1782px;top:1036px;font-size:15px;color:#fff">10:17 AM</div>
<div class="t" style="left:1779px;top:1059px;font-size:15px;color:#fff">5/29/2020</div>
<svg class="a" style="left:1868px;top:1044px" width="23" height="22"><path d="M1 1 H21 V15 H14 L11 18.5 L8 15 H1Z" fill="none" stroke="#fff" stroke-width="1.2"/></svg>
<div class="a" style="left:1916px;top:1030px;width:1px;height:50px;background:#6a5050"></div>
</body></html>
